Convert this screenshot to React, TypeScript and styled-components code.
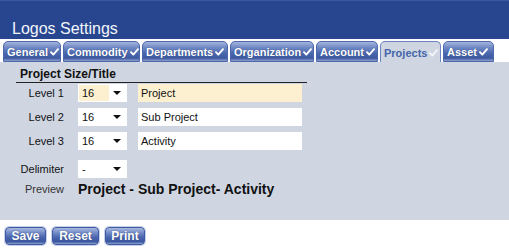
import React, { memo } from "react";
import styled, { createGlobalStyle } from "styled-components";

const GlobalStyle = createGlobalStyle`
    html, body {
        margin: 0;
        padding: 0;
        background: #ffffff;
        font-family: "Liberation Sans", Arial, sans-serif;
    }
`;

const Page = styled.div`
    width: 509px;
    height: 252px;
    overflow: hidden;
`;

const Header = styled.div`
    height: 39px;
    background: #27468f;
    border-top: 1px solid #3a58a0;
    box-sizing: border-box;
    padding: 18px 0 0 12px;

    h1 {
        margin: 0;
        font-size: 16px;
        font-weight: normal;
        color: #f4f6fb;
        line-height: 19px;
    }
`;

const TabRow = styled.div`
    display: flex;
    gap: 2px;
    padding: 2px 0 0 3px;
    height: 23px;
    box-sizing: border-box;
    background: #ffffff;
    align-items: flex-end;
`;

const Tab = styled.div<{ $active?: boolean; $w: number }>`
    width: ${(p) => p.$w}px;
    height: 21px;
    box-sizing: border-box;
    display: flex;
    align-items: center;
    gap: 2px;
    border: 1px solid ${(p) => (p.$active ? "#6b84c0" : "#4d68ad")};
    border-bottom: ${(p) => (p.$active ? "none" : "1px solid #4d68ad")};
    border-radius: 5px 5px 0 0;
    background: ${(p) =>
        p.$active
            ? "#cfd6e2"
            : "linear-gradient(#a4b4dc 0%, #6f87c4 30%, #4a66ad 60%, #3d599f 85%, #8ea0cc 100%)"};
    color: ${(p) => (p.$active ? "#4565aa" : "#ffffff")};
    font-size: 11px;
    font-weight: bold;
    padding: 1px 0 0 3px;
    white-space: nowrap;
    text-shadow: ${(p) => (p.$active ? "none" : "0 0 1px #2a3f78")};
`;

const Check = ({ light }: { light?: boolean }) => (
    <svg width="9" height="8" viewBox="0 0 9 8">
        <path
            d="M1 4.2 L3.3 6.6 L8 1.2"
            fill="none"
            stroke={light ? "#f2f4f8" : "#ffffff"}
            strokeWidth="1.9"
            strokeLinecap="round"
            strokeLinejoin="round"
        />
    </svg>
);

const Panel = styled.div`
    background: #cfd6e2;
    height: 158px;
    box-sizing: border-box;
    padding: 5px 0 0 16px;
`;

const SectionTitle = styled.div`
    width: 287px;
    font-size: 12px;
    font-weight: bold;
    color: #111;
    padding-left: 4px;
    line-height: 14px;
    border-bottom: 1px solid #222;
    padding-bottom: 1px;
`;

const Row = styled.div<{ $top: number }>`
    display: flex;
    align-items: center;
    margin-top: ${(p) => p.$top}px;
    height: 18px;
`;

const Label = styled.div<{ $muted?: boolean }>`
    width: 48px;
    margin-right: 14px;
    font-size: 11px;
    color: ${(p) => (p.$muted ? "#333" : "#111")};
    text-align: right;
    white-space: nowrap;
`;

const Select = styled.div<{ $hl?: boolean }>`
    width: 49px;
    height: 18px;
    background: #ffffff;
    box-sizing: border-box;
    display: flex;
    align-items: center;
    justify-content: space-between;
    padding: 1px 6px 1px 1px;
    font-size: 11px;
    color: #111;

    em {
        font-style: normal;
        height: 16px;
        line-height: 16px;
        width: 30px;
        padding-left: 3px;
        box-sizing: border-box;
        background: ${(p) => (p.$hl ? "#fdf0d0" : "transparent")};
    }
`;

const Arrow = styled.i`
    width: 0;
    height: 0;
    border-left: 4px solid transparent;
    border-right: 4px solid transparent;
    border-top: 4px solid #111;
`;

const TextBox = styled.div<{ $hl?: boolean }>`
    width: 164px;
    height: 18px;
    margin-left: 11px;
    box-sizing: border-box;
    background: ${(p) => (p.$hl ? "#fdf0d0" : "#ffffff")};
    font-size: 11px;
    color: #111;
    line-height: 18px;
    padding-left: 3px;
`;

const PreviewText = styled.div`
    font-size: 14px;
    font-weight: bold;
    color: #111;
`;

const Buttons = styled.div`
    display: flex;
    gap: 6px;
    padding: 7px 0 0 5px;
`;

const Button = styled.div<{ $w: number }>`
    width: ${(p) => p.$w}px;
    height: 18px;
    box-sizing: border-box;
    border: 1px solid #3d5aa3;
    border-radius: 4px;
    background: linear-gradient(#a9b9df 0%, #6a83c2 35%, #4864ac 60%, #3b579f 85%, #8c9fcc 100%);
    color: #ffffff;
    font-size: 12px;
    font-weight: bold;
    line-height: 16px;
    text-align: center;
    text-shadow: 0 0 1px #2a3f78;
    box-shadow: 0 0 0 1px #c6d0e6;
`;

const tabs = [
    { name: "General", w: 58 },
    { name: "Commodity", w: 77 },
    { name: "Departments", w: 86 },
    { name: "Organization", w: 84 },
    { name: "Account", w: 62 },
    { name: "Projects", w: 61, active: true },
    { name: "Asset", w: 51 },
];

const levels = [
    { label: "Level 1", size: "16", title: "Project", hl: true },
    { label: "Level 2", size: "16", title: "Sub Project" },
    { label: "Level 3", size: "16", title: "Activity" },
];

const App = memo(() => {
    return (
        <Page>
            <GlobalStyle />
            <Header>
                <h1>Logos Settings</h1>
            </Header>
            <TabRow>
                {tabs.map((t) => (
                    <Tab key={t.name} $w={t.w} $active={t.active}>
                        {t.name}
                        <Check light={t.active} />
                    </Tab>
                ))}
            </TabRow>
            <Panel>
                <SectionTitle>Project Size/Title</SectionTitle>
                {levels.map((l, i) => (
                    <Row key={l.label} $top={i === 0 ? 1 : 6}>
                        <Label>{l.label}</Label>
                        <Select $hl={l.hl}>
                            <em>{l.size}</em>
                            <Arrow />
                        </Select>
                        <TextBox $hl={l.hl}>{l.title}</TextBox>
                    </Row>
                ))}
                <Row $top={10}>
                    <Label>Delimiter</Label>
                    <Select>
                        <em>-</em>
                        <Arrow />
                    </Select>
                </Row>
                <Row $top={2}>
                    <Label $muted>Preview</Label>
                    <PreviewText>Project - Sub Project- Activity</PreviewText>
                </Row>
            </Panel>
            <Buttons>
                <Button $w={41}>Save</Button>
                <Button $w={47}>Reset</Button>
                <Button $w={40}>Print</Button>
            </Buttons>
        </Page>
    );
});

export default App;
